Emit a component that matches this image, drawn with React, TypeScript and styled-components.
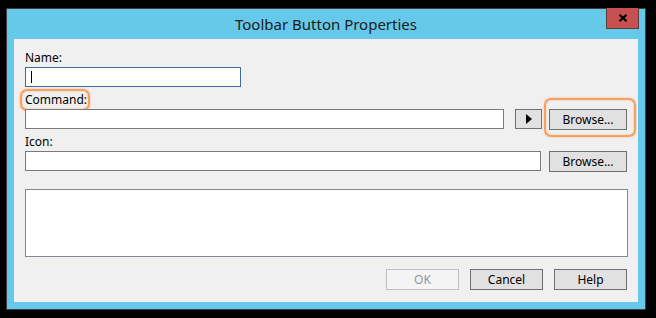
import React from "react";
import styled, { createGlobalStyle } from "styled-components";

const GlobalStyle = createGlobalStyle`
  html, body {
    margin: 0;
    padding: 0;
    background: #000;
  }
  body {
    font-family: "Segoe UI", "Noto Sans", sans-serif;
  }
`;

const Page = styled.div`
  width: 656px;
  height: 318px;
  box-sizing: border-box;
  padding: 8px 10px 8px 6px;
  background: #000;
`;

const Frame = styled.div`
  position: relative;
  width: 640px;
  height: 302px;
  box-sizing: border-box;
  border: 1px solid #3c3c3c;
  background: #66c9e9;
  padding: 0 7px 7px 7px;
  display: flex;
  flex-direction: column;
`;

const TitleBar = styled.div`
  height: 30px;
  display: flex;
  align-items: center;
  justify-content: center;
  font-size: 15px;
  color: #1b1b1b;
  padding-bottom: 1px;
  box-sizing: border-box;
`;

const CloseButton = styled.div`
  position: absolute;
  top: -1px;
  right: 6px;
  width: 33px;
  height: 21px;
  box-sizing: border-box;
  background: #c75050;
  border: 1px solid #5b3b3b;
  border-top: none;
  display: flex;
  align-items: center;
  justify-content: center;
`;

const Client = styled.div`
  flex: 1;
  background: #f0f0f0;
  padding: 11px 11px 0 11px;
  display: flex;
  flex-direction: column;
  font-size: 12px;
  color: #000;
`;

const Label = styled.div<{ $gap?: number }>`
  position: relative;
  align-self: flex-start;
  line-height: 16px;
  height: 16px;
  margin-top: ${(p) => p.$gap ?? 0}px;
  margin-bottom: 1px;
`;

const Row = styled.div`
  display: flex;
  align-items: center;
  height: 20px;
`;

const TextBox = styled.div<{ $width: number; $focused?: boolean }>`
  position: relative;
  width: ${(p) => p.$width}px;
  height: 20px;
  box-sizing: border-box;
  background: #fff;
  border: 1px solid ${(p) => (p.$focused ? "#3f6d99" : "#7a7a7a")};
`;

const Caret = styled.div`
  position: absolute;
  left: 5px;
  top: 3px;
  width: 1px;
  height: 12px;
  background: #000;
`;

const Button = styled.div<{ $width: number; $disabled?: boolean; $gap?: number }>`
  position: relative;
  width: ${(p) => p.$width}px;
  height: 21px;
  box-sizing: border-box;
  margin-left: ${(p) => p.$gap ?? 0}px;
  background: ${(p) => (p.$disabled ? "#f4f4f4" : "#e1e1e1")};
  border: 1px solid ${(p) => (p.$disabled ? "#bfbfbf" : "#707070")};
  color: ${(p) => (p.$disabled ? "#8e969e" : "#000")};
  display: flex;
  align-items: center;
  justify-content: center;
  font-size: 12px;
  flex-shrink: 0;
`;

const ArrowButton = styled(Button)`
  height: 20px;
`;

const ListBox = styled.div`
  margin-top: 18px;
  width: 603px;
  height: 68px;
  box-sizing: border-box;
  background: #fff;
  border: 1px solid #828790;
`;

const Footer = styled.div`
  margin-top: 12px;
  display: flex;
  justify-content: flex-end;
`;

const Highlight = styled.div<{ $top: number; $right: number; $bottom: number; $left: number }>`
  position: absolute;
  top: ${(p) => p.$top}px;
  right: ${(p) => p.$right}px;
  bottom: ${(p) => p.$bottom}px;
  left: ${(p) => p.$left}px;
  border: 2px solid rgba(248, 146, 70, 0.85);
  border-radius: 7px;
  box-shadow: 0 0 1.5px rgba(248, 146, 70, 0.8), inset 0 0 1.5px rgba(248, 146, 70, 0.8);
  pointer-events: none;
`;

export default function App() {
  return (
    <>
      <GlobalStyle />
      <Page>
        <Frame>
          <TitleBar>Toolbar Button Properties</TitleBar>
          <CloseButton>
            <svg width="10" height="8" viewBox="0 0 10 8">
              <path d="M1.5 0.8 L8.5 7.2 M8.5 0.8 L1.5 7.2" stroke="#000" strokeWidth="2.2" />
            </svg>
          </CloseButton>
          <Client>
            <Label>Name:</Label>
            <Row>
              <TextBox $width={216} $focused>
                <Caret />
              </TextBox>
            </Row>
            <Label $gap={5}>
              Command:
              <Highlight $top={-3} $right={-3} $bottom={-3} $left={-5} />
            </Label>
            <Row>
              <TextBox $width={479} />
              <ArrowButton $width={27} $gap={11}>
                <svg width="6" height="10" viewBox="0 0 6 10">
                  <path d="M0 0 L6 5 L0 10 Z" fill="#000" />
                </svg>
              </ArrowButton>
              <Button $width={78} $gap={7}>
                Browse...
                <Highlight $top={-12} $right={-10} $bottom={-8} $left={-6} />
              </Button>
            </Row>
            <Label $gap={5}>Icon:</Label>
            <Row>
              <TextBox $width={516} />
              <Button $width={78} $gap={8}>
                Browse...
              </Button>
            </Row>
            <ListBox />
            <Footer>
              <Button $width={73} $disabled>
                OK
              </Button>
              <Button $width={73} $gap={11}>
                Cancel
              </Button>
              <Button $width={73} $gap={11}>
                Help
              </Button>
            </Footer>
          </Client>
        </Frame>
      </Page>
    </>
  );
}
